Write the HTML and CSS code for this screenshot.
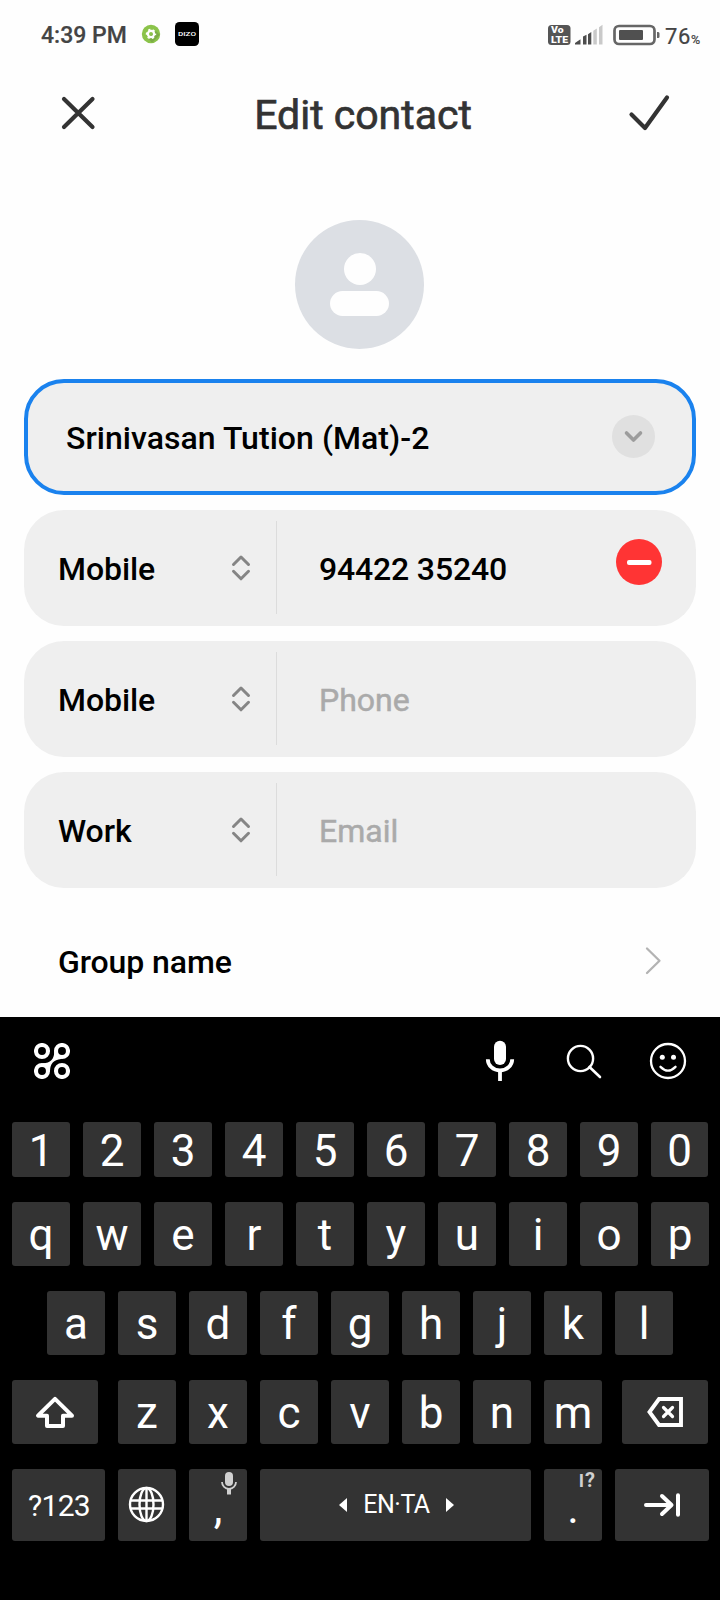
FILE: index.html
```html
<!DOCTYPE html>
<html lang="en">
<head>
<meta charset="utf-8">
<title>Edit contact</title>
<link rel="stylesheet" href="styles.css">
</head>
<body>
<div class="screen">
  <header class="status">
    <span class="time">4:39 PM</span>
    <svg class="app-green" width="24" height="24" viewBox="139 22 24 24"><circle cx="151" cy="34" r="9.200" fill="#8bc34a"/><path d="M152 42.800L159.800 35 156 31 148 38z" fill="#7cab46"/><circle cx="151" cy="34" r="3.100" fill="none" stroke="#fff" stroke-width="2.200"/><circle cx="151" cy="34" r="4.500" fill="none" stroke="#fff" stroke-width="1.400" stroke-dasharray="2.300 2.412" stroke-dashoffset="1.150"/><rect x="150" y="33" width="2" height="2" fill="#8bc34a"/></svg>
    <svg class="app-dizo" width="24" height="24" viewBox="0 0 24 24"><rect width="24" height="24" rx="4.500" fill="#000"/><text class="dizo" x="3" y="14.300" textLength="18" lengthAdjust="spacingAndGlyphs">DIZO</text></svg>
    <svg class="indicators" width="114" height="24" viewBox="547 23 114 24">
      <rect x="548" y="25" width="22.500" height="20" rx="3.500" fill="#555"/>
      <text class="volte" x="551" y="33.400" textLength="12.500" lengthAdjust="spacingAndGlyphs">Vo</text>
      <text class="volte" x="551" y="43" textLength="17" lengthAdjust="spacingAndGlyphs">LTE</text>
      <path d="M575 44.500v-1.500l5.500-3.700v5.200zM583 44.500v-8l3.500-1.800v9.800zM588 44.500v-10.200l3.300-2.300v12.500z" fill="#4d4d4d"/>
      <path d="M593.300 44.500V30.800l3.500-2.300v16zM599 44.500V27.200l3.500-2.500v19.800z" fill="#c9c9c9"/>
      <rect x="614.500" y="26" width="40" height="18" rx="4.500" fill="none" stroke="#666" stroke-width="2.700"/>
      <rect x="619" y="30" width="24" height="10" rx="1" fill="#505050"/>
      <path d="M657 32h1.200q1.300 0 1.300 1.500v3q0 1.500-1.300 1.500H657z" fill="#666"/>
    </svg>
    <span class="pct">76<small>%</small></span>
  </header>

  <div class="titlebar">
    <svg width="36" height="36" viewBox="60 95 36 36"><path d="M64 99L92.500 127M92.500 99L64 127" class="ink"/></svg>
    <h1>Edit contact</h1>
    <svg width="44" height="40" viewBox="627 93 44 40"><path d="M631.500 114.500L645 128 667 97.500" class="ink"/></svg>
  </div>

  <div class="avatar"><i class="head"></i><i class="body"></i></div>

  <main class="fields">
    <div class="field focused">
      <span class="name">Srinivasan Tution (Mat)-2</span>
      <svg class="expand" width="43" height="43" viewBox="0 0 43 43"><circle cx="21.500" cy="21.500" r="21.500" fill="#e0e0e0"/><path d="M14.500 18l7 7 7-7" fill="none" stroke="#9c9c9c" stroke-width="3.600" stroke-linecap="round" stroke-linejoin="round"/></svg>
    </div>
    <div class="field">
      <div class="kind"><span>Mobile</span><svg width="20" height="28" viewBox="0 0 20 28"><path class="sort" d="M2.500 10.500L10 3l7.500 7.500M2.500 17.300L10 24.800l7.500-7.500"/></svg></div>
      <span class="value number">94422 35240</span>
      <svg class="remove" width="46" height="46" viewBox="0 0 46 46"><circle cx="23" cy="23" r="23" fill="#ff3434"/><rect x="11" y="21" width="24.500" height="5" rx="2" fill="#fff"/></svg>
    </div>
    <div class="field">
      <div class="kind"><span>Mobile</span><svg width="20" height="28" viewBox="0 0 20 28"><path class="sort" d="M2.500 10.500L10 3l7.500 7.500M2.500 17.300L10 24.800l7.500-7.500"/></svg></div>
      <span class="value hint">Phone</span>
    </div>
    <div class="field">
      <div class="kind"><span>Work</span><svg width="20" height="28" viewBox="0 0 20 28"><path class="sort" d="M2.500 10.500L10 3l7.500 7.500M2.500 17.300L10 24.800l7.500-7.500"/></svg></div>
      <span class="value hint">Email</span>
    </div>
    <div class="group"><span>Group name</span><svg width="18" height="30" viewBox="644 946 18 30"><path d="M647 948.500L659.500 960.700 647 973" fill="none" stroke="#b3b3b3" stroke-width="2.300" stroke-linecap="round" stroke-linejoin="round"/></svg></div>
  </main>

  <section class="keyboard">
    <div class="tools">
      <svg width="36" height="36" viewBox="34 1043 36 36"><g fill="none" stroke="#fff" stroke-width="4.100"><circle cx="42" cy="1051" r="6"/><circle cx="62" cy="1051" r="6"/><circle cx="42" cy="1071" r="6"/><circle cx="62" cy="1071" r="6"/></g><path d="M54.200 1052Q54 1063 43 1063.200L42 1065 47 1067 48 1072 50 1071Q50 1060 61 1059L62 1057 57 1055 56 1050z" fill="#fff"/></svg>
      <svg class="mic" width="30" height="42" viewBox="485 1040 30 42"><rect x="494" y="1040.800" width="12" height="24.200" rx="6" fill="#fff"/><path d="M487.800 1059.200a12.200 11.300 0 0 0 24.400 0" fill="none" stroke="#fff" stroke-width="3.800"/><path d="M500 1071v10" stroke="#fff" stroke-width="3.800"/></svg>
      <svg class="search" width="36" height="36" viewBox="566 1043 36 36"><circle cx="580.500" cy="1058.500" r="12.600" fill="none" stroke="#fff" stroke-width="2.400"/><path d="M589.500 1067L600 1077" stroke="#fff" stroke-width="2.600" stroke-linecap="round"/></svg>
      <svg class="smile" width="38" height="38" viewBox="649 1042 38 38"><circle cx="668" cy="1061" r="17" fill="none" stroke="#fff" stroke-width="2.300"/><circle cx="662.300" cy="1057.200" r="2.500" fill="#fff"/><circle cx="673.500" cy="1057.200" r="2.500" fill="#fff"/><path d="M660.500 1066.800q7.500 7.600 15 0" fill="none" stroke="#fff" stroke-width="2.400" stroke-linecap="round"/></svg>
    </div>
    <div class="row digits"><b>1</b><b>2</b><b>3</b><b>4</b><b>5</b><b>6</b><b>7</b><b>8</b><b>9</b><b>0</b></div>
    <div class="row"><b>q</b><b>w</b><b>e</b><b>r</b><b>t</b><b>y</b><b>u</b><b>i</b><b>o</b><b>p</b></div>
    <div class="row home"><b>a</b><b>s</b><b>d</b><b>f</b><b>g</b><b>h</b><b>j</b><b>k</b><b>l</b></div>
    <div class="row">
      <b class="shift"><svg width="86" height="64" viewBox="12 1380 86 64"><path d="M55 1398.800L38 1415.700H47V1426H63V1415.700H72z" fill="none" stroke="#fff" stroke-width="4" stroke-linejoin="round"/></svg></b>
      <b>z</b><b>x</b><b>c</b><b>v</b><b>b</b><b>n</b><b>m</b>
      <b class="back"><svg width="86" height="64" viewBox="622 1380 86 64"><path d="M659 1399H681V1425H659L649.500 1412z" fill="none" stroke="#fff" stroke-width="3.900"/><path d="M663.500 1407.500l9 9m0-9l-9 9" stroke="#fff" stroke-width="3.200" stroke-linecap="round"/></svg></b>
    </div>
    <div class="row bottom">
      <b class="sym">?123</b>
      <b><svg width="58" height="72" viewBox="118 1469 58 72"><g fill="none" stroke="#fff" stroke-width="2.400"><circle cx="146.500" cy="1504.500" r="16.500"/><ellipse cx="146.500" cy="1504.500" rx="7" ry="16.500"/><path d="M131 1500.500h31M131 1508.500h31M146.500 1488v33"/></g></svg></b>
      <b class="low">,<svg class="corner" width="16" height="24" viewBox="221 1471 16 24"><rect x="225" y="1472" width="8" height="14" rx="4" fill="#d0d0d0"/><path d="M222 1482a7 6.800 0 0 0 14 0" fill="none" stroke="#d0d0d0" stroke-width="1.800"/><path d="M229 1489v5.500" stroke="#d0d0d0" stroke-width="4"/></svg></b>
      <b class="space"><svg width="8" height="14" viewBox="0 0 8 14"><path d="M8 0v14L0 7z" fill="#fff"/></svg><span>EN·TA</span><svg width="8" height="14" viewBox="0 0 8 14"><path d="M0 0v14l8-7z" fill="#fff"/></svg></b>
      <b class="low">.<span class="alt"><span class="bar">I</span>?</span></b>
      <b class="enter"><svg width="94" height="72" viewBox="615 1469 94 72"><path d="M646 1505H671M662 1496l9.500 9-9.500 9M678 1495.200v19.600" fill="none" stroke="#fff" stroke-width="4" stroke-linecap="round" stroke-linejoin="round"/></svg></b>
    </div>
  </section>
</div>
</body>
</html>
```
FILE: styles.css
```css
* { box-sizing: border-box; }
body { margin: 0; background: #fefefe; font-family: Roboto, "Liberation Sans", sans-serif; }
svg { display: block; flex: none; }
.screen { width: 720px; height: 1600px; display: flex; flex-direction: column; overflow: hidden; }

.status { height: 70px; display: flex; align-items: flex-start; padding: 22px 0 0 41px; color: #444; }
.time { width: 98px; padding-top: 1px; font-size: 23px; font-weight: 500; line-height: 26px; white-space: nowrap; -webkit-text-stroke: .2px #444; }
.app-dizo { margin-left: 12px; }
.indicators { margin: 1px 0 0 348px; }
.dizo { font: 500 6px Roboto, sans-serif; fill: #fff; }
.volte { font: 900 9.2px Roboto, sans-serif; fill: #fff; }
.pct { margin-left: 4px; padding-top: 1px; font-size: 22px; line-height: 28px; letter-spacing: .6px; white-space: nowrap; -webkit-text-stroke: .2px #444; }
.pct small { font-size: 12.5px; letter-spacing: 0; }

.titlebar { height: 86px; padding: 0 49px 0 60px; display: flex; align-items: center; justify-content: space-between; }
.titlebar h1 { margin: 3px 0 0 3px; font-size: 41px; font-weight: 400; line-height: 48px; color: #333; -webkit-text-stroke: .7px #333; }
.ink { fill: none; stroke: #333; stroke-width: 4.2; stroke-linecap: round; stroke-linejoin: round; }

.avatar { width: 129px; height: 129px; margin: 64px 0 0 295px; border-radius: 50%; background: #dcdfe4; display: flex; flex-direction: column; align-items: center; padding-top: 33px; }
.head { width: 32px; height: 32px; border-radius: 50%; background: #fefefe; }
.body { width: 59px; height: 25px; border-radius: 13px; background: #fefefe; margin-top: 6px; }

.fields { height: 668px; padding: 30px 24px 0; display: flex; flex-direction: column; gap: 15px; font-size: 32px; font-weight: 500; color: #000; }
.field { height: 116px; flex: none; border-radius: 40px; background: #efefef; display: flex; align-items: center; }
.field span, .group span { line-height: 38px; padding-top: 1px; white-space: nowrap; letter-spacing: -.08px; }
.focused { border: 4px solid #1a82ee; padding: 0 37px 0 38px; justify-content: space-between; }
.expand { margin-top: -2px; }
.field .name { letter-spacing: .04px; }
.field .number { letter-spacing: -.17px; }
.kind { width: 253px; height: 93px; margin-top: -1px; border-right: 1px solid #dcdcdc; padding: 0 25px 0 34px; display: flex; align-items: center; justify-content: space-between; }
.kind svg { margin-top: 1px; }
.field .kind span { padding-top: 3px; }
.sort { fill: none; stroke: #858585; stroke-width: 3; stroke-linecap: round; stroke-linejoin: round; }
.value { margin-left: 42px; flex: 1; }
.field .hint { color: #aaa; font-weight: 400; -webkit-text-stroke: .5px #aaa; letter-spacing: 0; }
.remove { margin: -12px 34px 0 0; }
.group { height: 116px; flex: none; padding: 0 34px; display: flex; align-items: center; justify-content: space-between; }

.keyboard { flex: 1; background: #000; color: #fff; }
.tools { height: 105px; display: flex; align-items: center; padding: 0 0 18px 34px; }
.mic { margin-left: 415px; }
.search { margin-left: 51px; }
.smile { margin-left: 47px; }
.row { display: flex; gap: 13px; padding: 0 12px; height: 64px; margin-bottom: 25px; }
.row b { width: 58px; flex: none; border-radius: 3px; background: #333; font-size: 44px; font-weight: 400; line-height: 66px; text-align: center; }
.digits { height: 55px; }
.row.digits b { line-height: 58px; }
.row.digits b:last-child { width: 57px; }
.home { padding-left: 47px; }
.row .shift { width: 86px; margin-right: 7px; }
.row .back { width: 86px; margin-left: 7px; }
.bottom { height: 72px; }
.row .sym { width: 93px; font-size: 30px; line-height: 74px; letter-spacing: -.7px; padding-left: 1px; }
.row .space { width: 271px; font-size: 25px; display: flex; align-items: center; justify-content: center; gap: 16px; padding-left: 2px; line-height: 72px; }
.space span { letter-spacing: -.5px; }
.row .enter { width: 94px; }
.row .low { position: relative; line-height: 78px; }
.corner { position: absolute; left: 32px; top: 2px; }
.alt { position: absolute; right: 7px; top: 0; font-size: 20px; font-weight: 700; line-height: 22px; color: #d0d0d0; }
.bar { font-size: 18px; margin-right: 1px; }
```
